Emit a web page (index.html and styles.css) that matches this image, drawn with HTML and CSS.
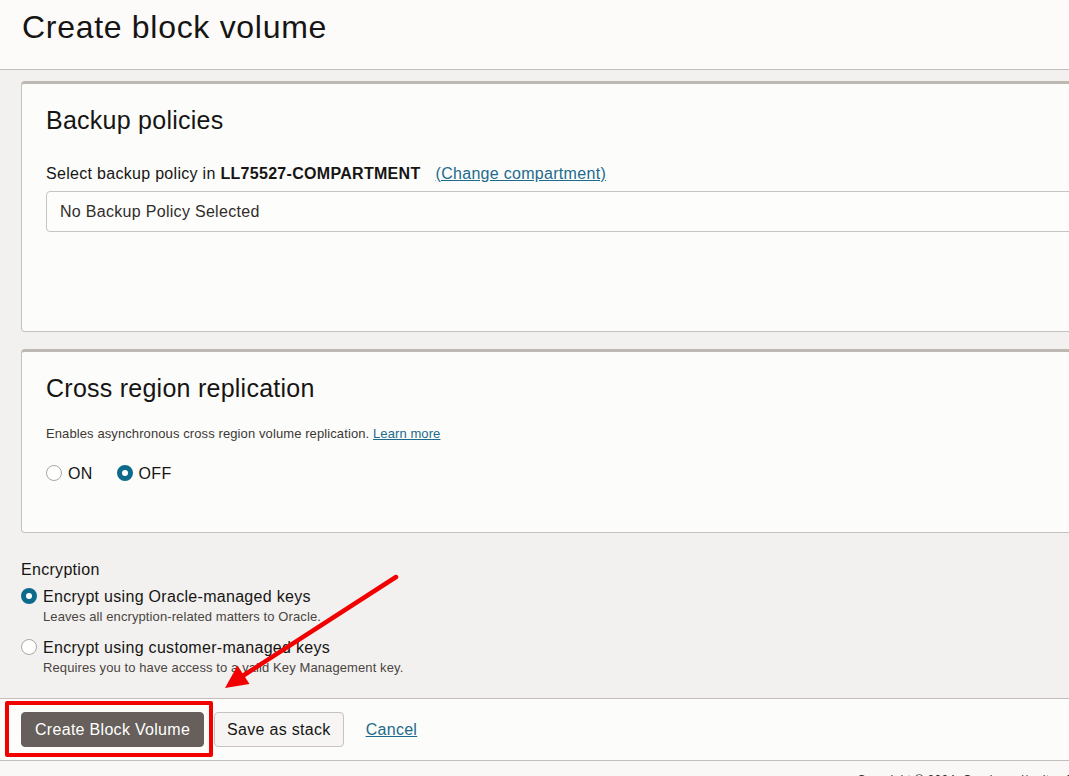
FILE: index.html
```html
<!DOCTYPE html>
<html lang="en">
<head>
<meta charset="utf-8">
<title>Create block volume</title>
<link rel="stylesheet" href="styles.css">
</head>
<body>
<div class="page">
  <header class="page-header">
    <h1 class="page-title">Create block volume</h1>
  </header>

  <main class="main">
    <section class="card card-backup">
      <h2 class="card-title">Backup policies</h2>
      <div class="field-label">Select backup policy in <b>LL75527-COMPARTMENT</b><a class="link change-link" href="#">(Change compartment)</a></div>
      <div class="select-box">No Backup Policy Selected</div>
    </section>

    <section class="card card-replication">
      <h2 class="card-title">Cross region replication</h2>
      <p class="card-desc">Enables asynchronous cross region volume replication. <a class="link" href="#">Learn more</a></p>
      <div class="radio-inline">
        <label class="radio"><span class="radio-dot"></span>ON</label>
        <label class="radio"><span class="radio-dot checked"></span>OFF</label>
      </div>
    </section>

    <section class="encryption">
      <div class="enc-label">Encryption</div>
      <label class="radio enc-option"><span class="radio-dot checked"></span>Encrypt using Oracle-managed keys</label>
      <div class="enc-help">Leaves all encryption-related matters to Oracle.</div>
      <label class="radio enc-option enc-option-2"><span class="radio-dot"></span>Encrypt using customer-managed keys</label>
      <div class="enc-help">Requires you to have access to a valid Key Management key.</div>
    </section>
  </main>

  <div class="action-bar">
    <button class="btn btn-primary" type="button">Create Block Volume</button>
    <button class="btn btn-secondary" type="button">Save as stack</button>
    <a class="link cancel-link" href="#">Cancel</a>
  </div>

  <footer class="page-footer">Copyright © 2024, Oracle and/or its affiliates.</footer>
</div>

<div class="highlight-box"></div>
<svg class="annotation-arrow" width="1069" height="776" viewBox="0 0 1069 776">
  <line x1="396" y1="577" x2="241" y2="677" stroke="#f20000" stroke-width="4.5" stroke-linecap="round"/>
  <polygon points="225,688 237.5,665.5 249.5,684" fill="#f20000"/>
</svg>
</body>
</html>
```

FILE: styles.css
```css
html, body {
  margin: 0;
  padding: 0;
  width: 1069px;
  height: 776px;
  overflow: hidden;
}

body {
  font-family: "Liberation Sans", Arial, sans-serif;
  color: #161513;
  background: #f9f8f7;
  position: relative;
  letter-spacing: 0.3px;
}

.page {
  width: 1140px;
}

.page-header {
  background: #fcfbfa;
  border-bottom: 1px solid #c3beb9;
  box-sizing: border-box;
  height: 70px;
  padding: 8px 0 0 22px;
}

.page-title {
  margin: 0;
  font-size: 32px;
  font-weight: normal;
  line-height: 38px;
  letter-spacing: 0.7px;
  color: #161513;
}

.main {
  background: #f2f1ef;
  padding: 11px 0 0 21px;
  display: flex;
  flex-direction: column;
}

.card {
  background: #fcfcfb;
  border: 1px solid #c5c1bc;
  border-top: 3px solid #bdb8b2;
  border-radius: 4px;
  padding: 22px 0 0 24px;
}

.card-replication {
  margin-top: 17px;
  padding-bottom: 49px;
}

.card-backup {
  padding-bottom: 99px;
}

.card-title {
  margin: 0;
  font-size: 25px;
  font-weight: normal;
  line-height: 29px;
  letter-spacing: 0.25px;
}

.field-label {
  margin-top: 29px;
  font-size: 16px;
  line-height: 19px;
}

.field-label b {
  font-weight: bold;
}

.link {
  color: #1d6a8c;
  text-decoration: underline;
}

.change-link {
  margin-left: 15px;
}

.select-box {
  margin-top: 8px;
  height: 41px;
  box-sizing: border-box;
  border: 1px solid #c7c3be;
  border-radius: 4px;
  background: #fdfdfc;
  padding: 0 0 0 13px;
  display: flex;
  align-items: center;
  font-size: 16px;
  color: #312d2a;
}

.card-desc {
  margin: 23px 0 0;
  font-size: 13px;
  line-height: 15px;
  letter-spacing: 0.1px;
  color: #3c3834;
}

.radio-inline {
  margin-top: 23px;
  display: flex;
  gap: 24px;
  line-height: 19px;
  font-size: 16px;
}

.radio {
  display: flex;
  align-items: center;
  gap: 6px;
  font-size: 16px;
  line-height: 19px;
}

.radio-dot {
  width: 16px;
  height: 16px;
  box-sizing: border-box;
  border-radius: 50%;
  border: 1px solid #aca7a2;
  background: #ffffff;
  flex: none;
  position: relative;
  top: -1px;
}

.radio-dot.checked {
  border: 5px solid #0d6a8a;
  background: #ffffff;
}

.encryption {
  display: flex;
  flex-direction: column;
  padding: 27px 0 23px 0;
}

.enc-label {
  font-size: 16px;
  line-height: 19px;
}

.enc-option {
  margin-top: 8px;
}

.enc-option-2 {
  margin-top: 14px;
}

.enc-help {
  margin: 3px 0 0 22px;
  font-size: 13px;
  line-height: 15px;
  letter-spacing: 0.1px;
  color: #4a4541;
}

.action-bar {
  background: #fcfcfb;
  border-top: 1px solid #c3beb9;
  border-bottom: 1px solid #c3beb9;
  padding: 13px 0 13px 21px;
  display: flex;
  align-items: center;
  gap: 10px;
}

.btn {
  height: 35px;
  box-sizing: border-box;
  border-radius: 4px;
  font-family: "Liberation Sans", Arial, sans-serif;
  font-size: 16px;
  line-height: 19px;
  letter-spacing: 0.3px;
  cursor: pointer;
}

.btn-primary {
  background: #665f5b;
  color: #ffffff;
  border: 1px solid #665f5b;
  padding: 0 13px;
}

.btn-secondary {
  background: #f6f5f3;
  color: #161513;
  border: 1px solid #c6c2bd;
  padding: 0 12px;
}

.cancel-link {
  margin-left: 12px;
  font-size: 16px;
}

.page-footer {
  padding: 12px 0 0 857px;
  font-size: 12px;
  line-height: 14px;
  color: #312d2a;
  white-space: nowrap;
}

.highlight-box {
  position: absolute;
  left: 5px;
  top: 701px;
  width: 208px;
  height: 56px;
  box-sizing: border-box;
  border: 4px solid #f20000;
  border-radius: 2px;
}

.annotation-arrow {
  position: absolute;
  left: 0;
  top: 0;
  pointer-events: none;
}
```
